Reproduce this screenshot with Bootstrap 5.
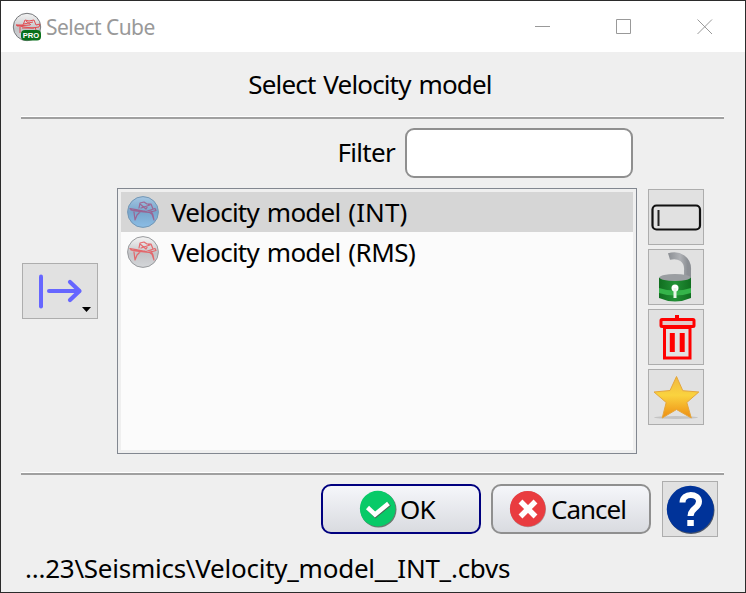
<!DOCTYPE html>
<html lang="en">
<head>
<meta charset="utf-8">
<title>Select Cube</title>
<link href="https://cdn.jsdelivr.net/npm/bootstrap@5.3.0/dist/css/bootstrap.min.css" rel="stylesheet">
<style>
body{margin:0;background:#efefef;color:#000;font-family:"Noto Sans","Open Sans",sans-serif;font-size:26px;overflow:hidden}
.dialog-window{width:746px;height:593px;border:1px solid #2b2b2b;background:#efefef}
.title-strip{height:51px;background:#fff;color:#999;padding-left:11px;padding-right:32px;font-size:21px}
.title-strip .win-buttons{gap:65px}
.heading{height:64px;line-height:64px;padding-right:6px}
.rule{height:3px;margin:0 21px 0 20px;background:#a0a0a0;border-top:1px solid #fff}
.rule-low{margin-top:18px}
.filter-line{height:50px;margin-top:9px;padding-right:112px;gap:10px;line-height:49px}
.filter-box{width:228px;height:50px;border:2px solid #8f8f8f;border-radius:9px;background:#fff}
.middle{margin-top:10px;height:266px;padding-left:21px}
.tool{width:56px;height:56px;background:#e1e1e1;border:1px solid #adadad;border-radius:0;padding:0;display:block}
.tool svg,.entry svg,.choice svg,.title-strip svg{display:block;flex:none}
.tool-wide{width:76px;margin-top:75px}
.entries{width:520px;margin-left:19px;border:1px solid #828790;background:#efefef;padding:3px}
.entries-inner{height:258px;background:#fbfbfb}
.entry{height:40px;padding:0 0 0 6px;gap:12px;line-height:40px}
.entry.chosen{background:#d6d6d6}
.tools{margin-left:11px;margin-top:1px;gap:4px}
.actions{margin-top:6px;height:56px;padding-left:320px}
.choice{width:160px;height:50px;border:2px solid #8f8f8f;border-radius:10px;background:linear-gradient(#f5f6fa,#d9dbe0);color:#000;font-size:26px;line-height:46px;padding:0 0 0 16px;gap:4px}
.choice.main{border-color:#00007f;padding-left:36px;gap:3px;margin-right:10px}
.help{margin-left:11px}
.status{padding-left:24px;height:54px;line-height:62px}
.t{white-space:pre;display:inline-block}
.t-title{letter-spacing:-.55px;position:relative;top:1px}
.t-head{letter-spacing:-.85px;word-spacing:2px}
.t-list{letter-spacing:-.75px;word-spacing:1.8px}
.t-paren{letter-spacing:.1px}
.t-paren-b{letter-spacing:-.5px}
.t-filter{letter-spacing:-.7px}
.t-ok{letter-spacing:-.8px}
.t-cancel{letter-spacing:-1px}
.t-status{letter-spacing:-.25px}
</style>
<script src="https://cdn.jsdelivr.net/npm/bootstrap@5.3.0/dist/js/bootstrap.bundle.min.js"></script>
</head>
<body>
<svg width="0" height="0" class="position-absolute" aria-hidden="true">
<defs>
<linearGradient id="silver" x1="0" y1="0" x2="0" y2="1"><stop offset="0" stop-color="#f3f3f3"/><stop offset=".2" stop-color="#e4e4e5"/><stop offset=".55" stop-color="#c3c4c7"/><stop offset="1" stop-color="#d4d6d9"/></linearGradient>
<linearGradient id="blue" x1="0" y1="0" x2="0" y2="1"><stop offset="0" stop-color="#a5c6e2"/><stop offset=".5" stop-color="#78a6cc"/><stop offset="1" stop-color="#8bbde5"/></linearGradient>
<linearGradient id="gold" x1="0" y1="0" x2="0" y2="1"><stop offset="0" stop-color="#f0b840"/><stop offset=".45" stop-color="#fad33f"/><stop offset="1" stop-color="#ee8d12"/></linearGradient>
<linearGradient id="body-green" x1="0" y1="0" x2="1" y2="0"><stop offset="0" stop-color="#116e20"/><stop offset=".5" stop-color="#219035"/><stop offset="1" stop-color="#116e20"/></linearGradient>
<linearGradient id="steel" x1="0" y1="0" x2="1" y2="0"><stop offset="0" stop-color="#8e9196"/><stop offset=".6" stop-color="#b0b2b6"/><stop offset="1" stop-color="#8c8f94"/></linearGradient>
<g id="hat" fill="none" stroke-linecap="round" stroke-linejoin="round"><path d="M3 12.500l6 1 10 2 9-3 1 2-7 2-10-1-7-1zM4 14l14 1M12 12l1-5 4-1 3 2 4 0 2 5M13 8l6 5 3-5M14 12l9-3M7 16l1 8 2-5 3-3M24 15l2 4 1 5-2-6M22 16l4 3"/></g>
</defs>
</svg>
<main class="dialog-window d-flex flex-column">
<header class="title-strip d-flex align-items-center">
<svg width="30" height="30" viewBox="0 0 30 30"><circle cx="15" cy="15" r="13.7" fill="url(#silver)" stroke="#77797c" stroke-width="1"/><path d="M4 13l7 0 2-5 4 1 5-1 2 5 4-1-1 3-7 1-8-1zM5 14l13-1M12 12l9-2M14 9l5 4M8 15l0 6M23 15l1 3M10 16l12 0" fill="none" stroke="#e24b50" stroke-linejoin="round"/><rect x="9" y="18" width="20" height="10.500" rx="4" fill="#08701a"/><text x="10.800" y="26" textLength="16.500" lengthAdjust="spacingAndGlyphs" font-family="Liberation Sans,sans-serif" font-size="8" font-weight="700" fill="#fff">PRO</text></svg>
<span class="t t-title ms-1">Select Cube</span>
<div class="win-buttons d-flex ms-auto">
<svg width="16" height="16" viewBox="0 0 16 16"><path d="M0 7.500h15" stroke="#999"/></svg>
<svg width="16" height="16" viewBox="0 0 16 16"><path d="M.5 .5h14v14h-14z" fill="none" stroke="#999"/></svg>
<svg width="16" height="16" viewBox="0 0 16 16"><path d="M.5 .5l14.500 14.500M15 .5L.5 15" stroke="#999" fill="none"/></svg>
</div>
</header>
<div class="heading text-center"><span class="t t-head">Select Velocity model</span></div>
<div class="rule"></div>
<div class="filter-line d-flex justify-content-end"><label class="t t-filter" for="filter">Filter</label><input id="filter" class="filter-box" type="text"></div>
<section class="middle d-flex align-items-start">
<button class="tool tool-wide" aria-label="Direction"><svg width="74" height="54" viewBox="0 0 74 54"><g fill="none" stroke="#6666ff" stroke-linecap="round" stroke-linejoin="round"><path d="M18 12.500v30" stroke-width="4"/><path d="M26 27h30" stroke-width="4"/><path d="M47 18l9.500 9-9.500 9" stroke-width="4.200"/></g><path d="M59 43h9l-4.500 5z"/></svg></button>
<div class="entries"><div class="entries-inner">
<div class="entry chosen d-flex align-items-center"><svg width="32" height="32" viewBox="0 0 32 32"><circle cx="16" cy="16" r="15.400" fill="url(#blue)" stroke="#7397b5"/><use href="#hat" stroke="#a35283" stroke-opacity=".8" stroke-width="1.200"/></svg><span class="t t-list">Velocity model <span class="t-paren">(INT)</span></span></div>
<div class="entry d-flex align-items-center"><svg width="32" height="32" viewBox="0 0 32 32"><circle cx="16" cy="16" r="15.400" fill="url(#silver)" stroke="#999b9e"/><use href="#hat" stroke="#e8565b" stroke-opacity=".85" stroke-width="1.200"/></svg><span class="t t-list">Velocity model <span class="t-paren-b">(RMS)</span></span></div>
</div></div>
<div class="tools d-flex flex-column">
<button class="tool" aria-label="Rename"><svg width="54" height="54" viewBox="0 0 54 54"><rect x="3.500" y="15.500" width="47.500" height="24" rx="4" fill="none" stroke="#111" stroke-width="2.200"/><path d="M9.500 20v16" stroke="#222" stroke-width="2"/></svg></button>
<button class="tool" aria-label="Unlock"><svg width="54" height="54" viewBox="0 0 54 54"><path d="M20 6.500c10-3 19.500 3 18.500 14v8" fill="none" stroke="url(#steel)" stroke-width="7"/><path d="M10 28c6-4 26-4 32 0v20q-16 7-32 0z" fill="url(#body-green)"/><ellipse cx="26" cy="27.500" rx="15.500" ry="3.500" fill="#9b9ea2"/><path d="M10 38q16 5 32 0v5q-16 5-32 0z" fill="#35b44a"/><circle cx="26" cy="38" r="3.500" fill="#fff"/><path d="M26 38v10" stroke="#e8f6e8" stroke-width="3"/></svg></button>
<button class="tool" aria-label="Remove"><svg width="54" height="54" viewBox="0 0 54 54"><g fill="none" stroke="#f00"><path d="M15.500 17.500h25.500V48H15.500z" stroke-width="3"/><rect x="12" y="9.500" width="33" height="7" rx="1" stroke-width="3" fill="#e1c9c9"/><path d="M28 5v5" stroke-width="4"/><path d="M23.300 23v19M33.200 23v19" stroke-width="5"/></g></svg></button>
<button class="tool" aria-label="Set as default"><svg width="54" height="54" viewBox="0 0 54 54"><ellipse cx="27" cy="47.500" rx="22" ry="1.500" fill="#c4c4c4"/><path d="M27.500 6.500l6.300 14.200 16 1.300-12 10.500 4.500 15.500-14.800-8.500-14.300 8.500 4-15.500L5 22l16-1.500z" fill="url(#gold)" stroke="#e5a63c" stroke-width="1" stroke-linejoin="round"/></svg></button>
</div>
</section>
<div class="rule rule-low"></div>
<div class="actions d-flex align-items-center">
<button class="choice main d-flex align-items-center"><svg width="38" height="38" viewBox="0 0 38 38"><circle cx="19.500" cy="19.500" r="18" fill="#6a7a70"/><circle cx="18.700" cy="18.600" r="17.800" fill="#08ca68"/><path d="M9.500 18.500l7 7 14-11.500" fill="none" stroke="#47644f" stroke-width="4.500"/><path d="M8.500 17.500l7.500 7 13.500-11" fill="none" stroke="#fff" stroke-width="4.500"/></svg><span class="t t-ok">OK</span></button>
<button class="choice d-flex align-items-center"><svg width="38" height="38" viewBox="0 0 38 38"><circle cx="19" cy="19.200" r="18" fill="#a99"/><circle cx="18.700" cy="18.700" r="17.800" fill="#e93c40"/><path d="M11.500 11.500l15 15m0-15l-15 15" stroke="#fff" stroke-width="5.500"/></svg><span class="t t-cancel">Cancel</span></button>
<button class="tool help" aria-label="Help"><svg width="54" height="54" viewBox="0 0 54 54"><circle cx="28" cy="28.500" r="23.500" fill="#4b5568"/><circle cx="27.300" cy="27.300" r="23.500" fill="#039"/><path d="M19.500 20.500c0-10.500 16.500-9.500 16.500-1 0 7-8.500 6.500-8.500 14.500" fill="none" stroke="#fff" stroke-width="6"/><rect x="24.300" y="38" width="6.500" height="6" fill="#fff"/></svg></button>
</div>
<footer class="status"><span class="t t-status">...23\Seismics\Velocity_model__INT_.cbvs</span></footer>
</main>
</body>
</html>
